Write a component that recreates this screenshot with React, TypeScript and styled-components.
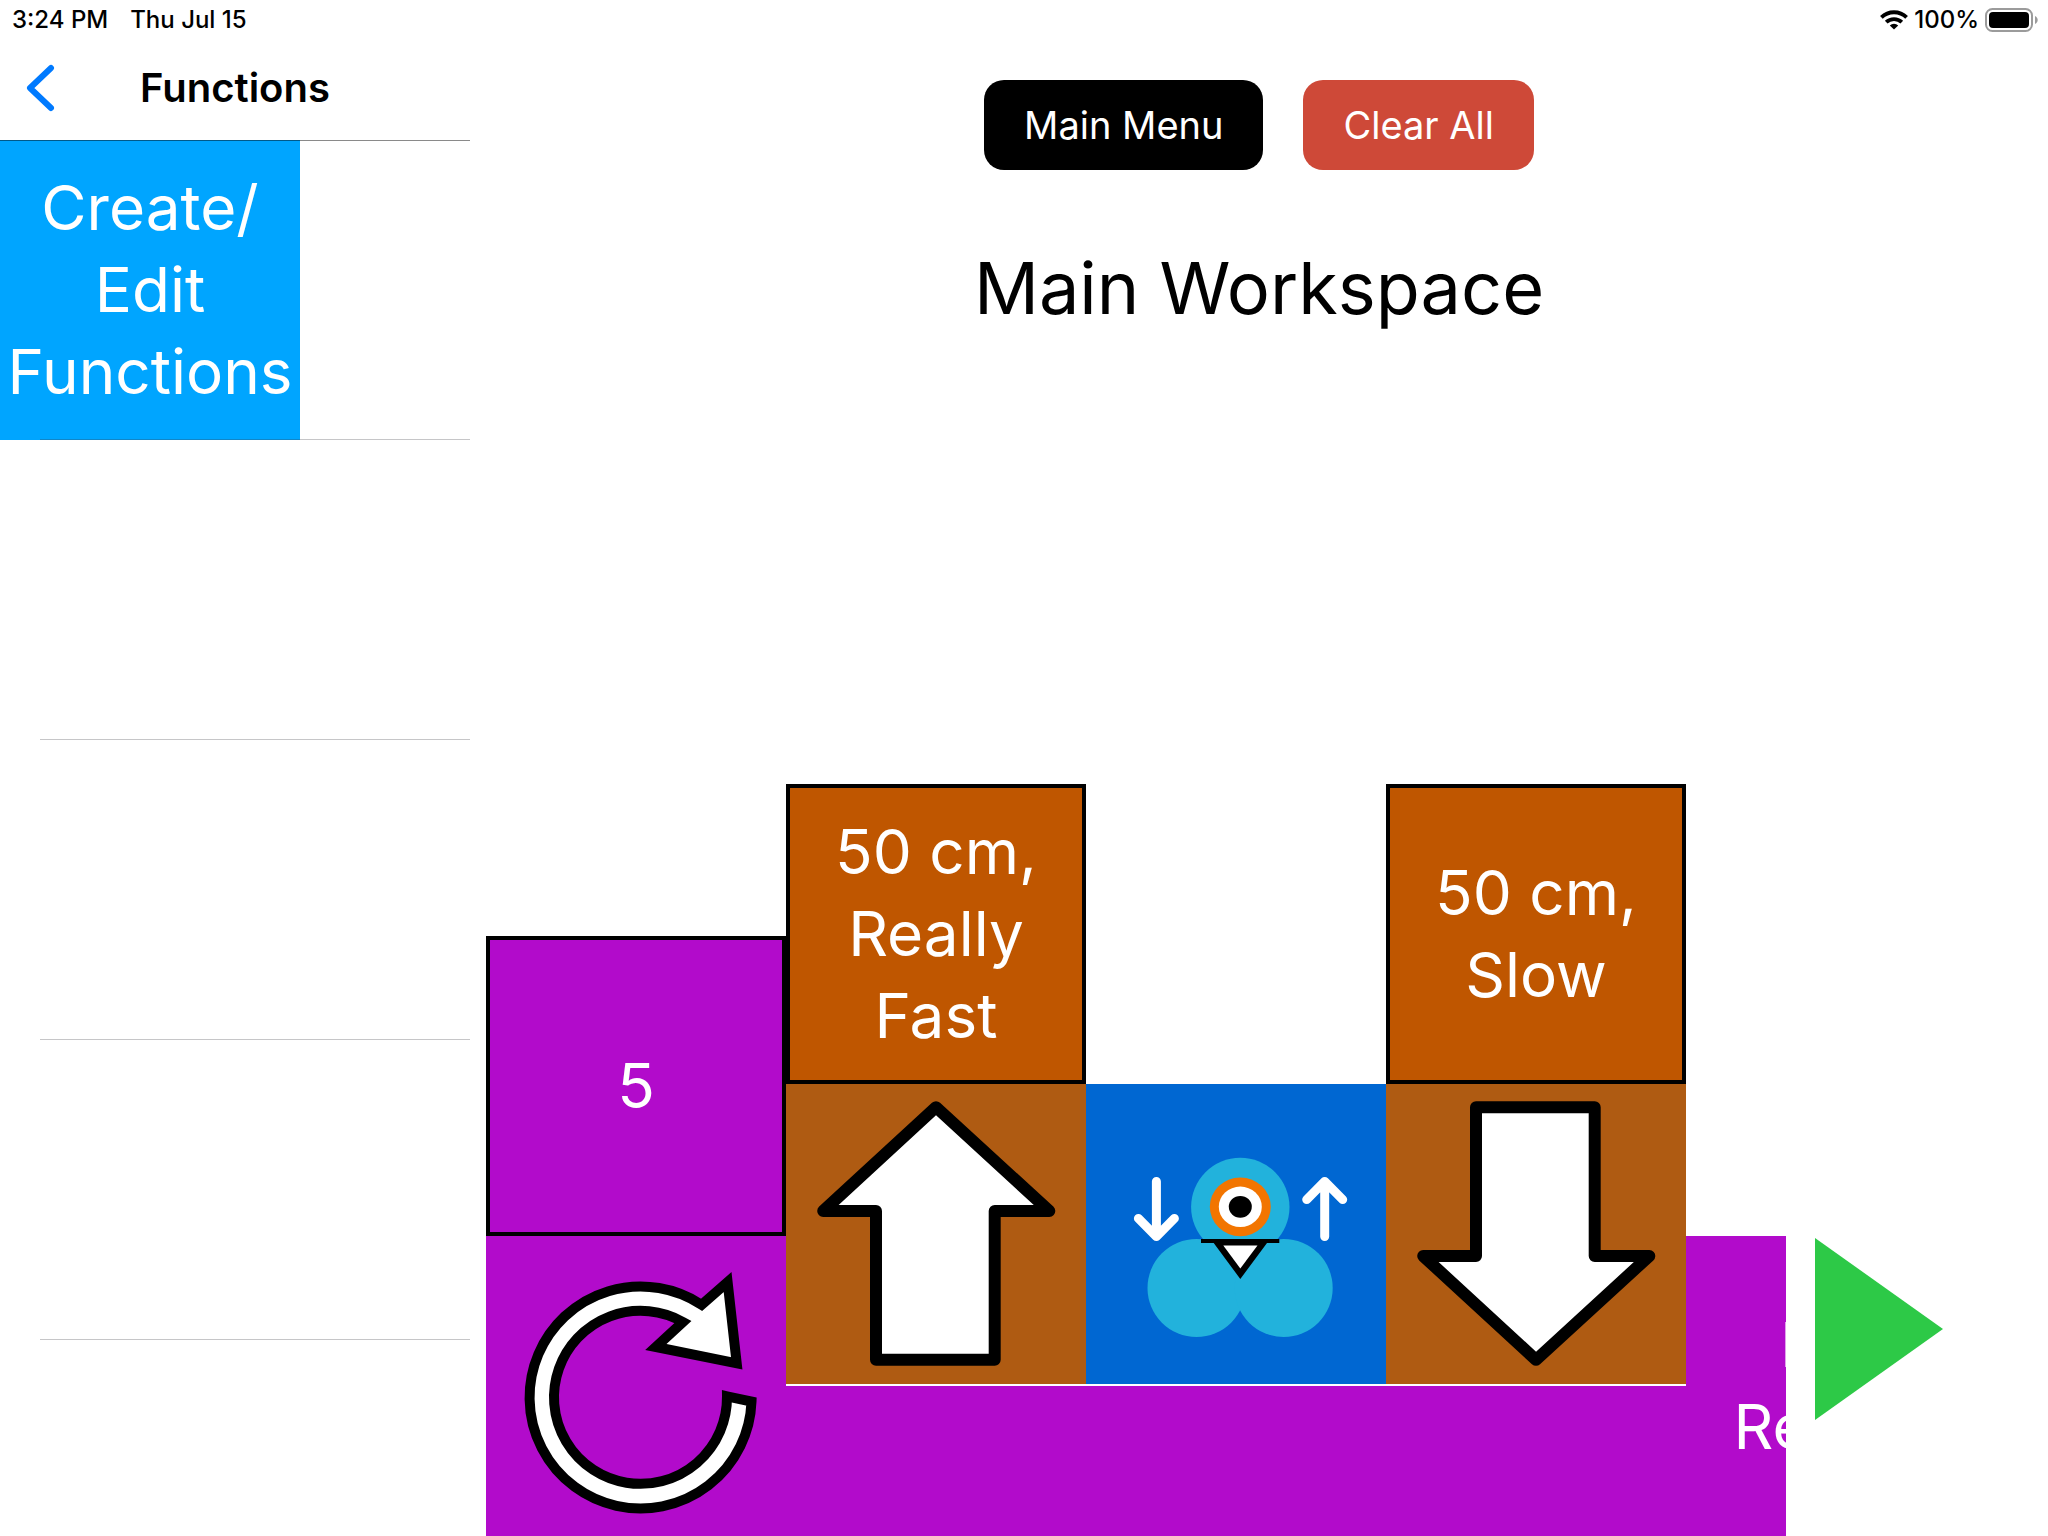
import React from "react";
import styled, { createGlobalStyle } from "styled-components";

const color = {
  link: "#007aff",
  sky: "#00a5ff",
  purple: "#b20bcb",
  brown: "#af5b12",
  rust: "#bf5600",
  blue: "#0067d2",
  teal: "#22b2dc",
  orange: "#f27500",
  red: "#ce4938",
  green: "#2dc947",
};

const GlobalStyle = createGlobalStyle`
  *, *::before, *::after { box-sizing: border-box; }
  html, body { margin: 0; padding: 0; background: #fff; }
  body {
    color: #000;
    font-family: Inter, "Liberation Sans", sans-serif;
    overflow: hidden;
  }
  h1, h2, ul { margin: 0; padding: 0; font-weight: 400; }
  button { border: 0; padding: 0; font: inherit; cursor: pointer; }
`;

const Screen = styled.div`
  display: flex;
  flex-direction: column;
  height: 100vh;
  overflow: hidden;
`;

const StatusBar = styled.header`
  display: flex;
  align-items: center;
  justify-content: space-between;
  flex: none;
  height: 40px;
  padding: 0 10px 0 12px;
  font-size: 24px;
  line-height: 32px;
  font-weight: 500;
`;

const StatusGroup = styled.div<{ $gap: number }>`
  display: flex;
  align-items: center;
  gap: ${(p) => p.$gap}px;
`;

const Body = styled.div`
  display: flex;
  flex: 1;
  min-height: 0;
`;

const Sidebar = styled.nav`
  flex: none;
  width: 470px;
  overflow: hidden;
`;

const NavHeader = styled.div`
  position: relative;
  display: grid;
  grid-template-columns: 80px 1fr 80px;
  align-items: center;
  height: 100px;
  padding-bottom: 4px;

  &::after {
    content: "";
    position: absolute;
    z-index: 1;
    top: 100%;
    left: 0;
    right: 0;
    height: 1px;
    background: rgba(0, 0, 0, 0.46);
  }
`;

const BackButton = styled.button`
  display: flex;
  align-items: center;
  justify-content: center;
  height: 80px;
  background: none;
  color: ${color.link};
`;

const NavTitle = styled.h2`
  font-size: 40px;
  line-height: 48px;
  font-weight: 600;
  text-align: center;
`;

const BlockList = styled.ul`
  list-style: none;
`;

const BlockRow = styled.li`
  position: relative;
  height: 300px;

  &::after {
    content: "";
    position: absolute;
    left: 40px;
    right: 0;
    bottom: 0;
    height: 1px;
    background: rgba(60, 60, 67, 0.29);
  }
`;

const Tile = styled.button<{ $fill: string; $outlined?: boolean }>`
  display: flex;
  align-items: center;
  justify-content: center;
  flex: none;
  width: 300px;
  height: 300px;
  border: ${(p) => (p.$outlined ? "4px solid #000" : "0")};
  background: ${(p) => p.$fill};
  color: #fff;
  font-size: 62px;
  line-height: 82px;
  text-align: center;
  white-space: pre-line;
`;

const Workspace = styled.main`
  display: flex;
  flex-direction: column;
  flex: 1;
  min-width: 0;
`;

const Actions = styled.div`
  display: flex;
  justify-content: center;
  gap: 40px;
  padding-top: 40px;
`;

const ActionButton = styled.button<{ $fill: string }>`
  height: 90px;
  padding: 0 40px;
  border-radius: 20px;
  background: ${(p) => p.$fill};
  color: #fff;
  font-size: 38px;
  line-height: 48px;
`;

const Title = styled.h1`
  margin-top: 70px;
  font-size: 72px;
  line-height: 96px;
  text-align: center;
`;

const ProgramArea = styled.div`
  display: flex;
  align-items: flex-end;
  margin-top: auto;
  padding-left: 16px;
`;

const Program = styled.section`
  display: flex;
  align-items: flex-end;
  flex: 1;
  min-width: 0;
  overflow: hidden;
`;

const Stack = styled.div`
  display: flex;
  flex-direction: column;
  flex: none;
`;

const LoopBody = styled.div`
  display: flex;
  flex-direction: column;
  flex: none;
  gap: 2px;
`;

const LoopSteps = styled.div`
  display: flex;
  align-items: flex-end;
`;

const LoopBar = styled.div`
  height: 150px;
  background: ${color.purple};
`;

const RunPanel = styled.aside`
  flex: none;
  width: 262px;
  padding: 0 0 116px 29px;
`;

const RunButton = styled.button`
  display: block;
  background: none;
`;

const WifiIcon = () => (
  <svg width="28" height="20" viewBox="0 0 28 20" aria-hidden="true">
    <g fill="none" stroke="#000" strokeWidth="3.8">
      <path d="M1.4 7.4A18 18 0 0 1 26.6 7.4" />
      <path d="M6.2 12.2A11.2 11.2 0 0 1 21.8 12.2" />
    </g>
    <path d="M14 19.6L9.8 15.4A6 6 0 0 1 18.2 15.4Z" fill="#000" />
  </svg>
);

const BatteryIcon = () => (
  <svg width="53" height="24" viewBox="0 0 53 24" aria-hidden="true">
    <rect x="1" y="1" width="46" height="22" rx="6.5" fill="none" stroke="#9b9b9b" strokeWidth="2" />
    <rect x="4" y="4" width="40" height="16" rx="4" fill="#000" />
    <path d="M50 8C53.6 9.4 53.6 14.6 50 16Z" fill="#9b9b9b" />
  </svg>
);

const BackIcon = () => (
  <svg width="30" height="48" viewBox="0 0 30 48" aria-hidden="true">
    <path
      d="M26 4L5 24L26 44"
      fill="none"
      stroke="currentColor"
      strokeWidth="6"
      strokeLinecap="round"
      strokeLinejoin="round"
    />
  </svg>
);

const TileArt = ({ children }: { children: React.ReactNode }) => (
  <svg width="300" height="300" viewBox="0 0 300 300" aria-hidden="true">
    {children}
  </svg>
);

const RepeatArt = () => (
  <TileArt>
    <path
      d="M241 160.3L265.5 165.6A111 111 0 1 1 215.7 68.8L241.6 46L250.7 127.3L169.8 111L197 86A86.5 86.5 0 1 0 241 160.3Z"
      fill="#fff"
      stroke="#000"
      strokeWidth="10"
      strokeMiterlimit="8"
    />
  </TileArt>
);

const ForwardArt = () => (
  <TileArt>
    <path
      d="M150 23.2L263.3 127H208.7V275.7H90V127H37.2Z"
      fill="#fff"
      stroke="#000"
      strokeWidth="12"
      strokeLinejoin="round"
    />
  </TileArt>
);

const BackwardArt = () => (
  <TileArt>
    <path
      d="M150 275.8L263.3 172H208.7V23.2H90V172H37.2Z"
      fill="#fff"
      stroke="#000"
      strokeWidth="12"
      strokeLinejoin="round"
    />
  </TileArt>
);

const RobotArt = () => (
  <TileArt>
    <g fill={color.teal}>
      <circle cx="154.3" cy="123" r="49.2" />
      <circle cx="110.5" cy="204" r="49" />
      <circle cx="197.7" cy="204" r="49" />
    </g>
    <ellipse cx="154.3" cy="122.8" rx="30.5" ry="29.4" fill={color.orange} />
    <ellipse cx="154.3" cy="122.8" rx="21.5" ry="20.2" fill="#fff" />
    <ellipse cx="154.3" cy="122.8" rx="11.5" ry="10.9" fill="#000" />
    <path d="M115 155H193.3V159H181L154.3 195L127.7 159H115Z" fill="#000" />
    <path d="M137.3 161.5H171.5L154.3 184.4Z" fill="#fff" />
    <g fill="none" stroke="#fff" strokeWidth="9" strokeLinecap="round" strokeLinejoin="round">
      <path d="M70.4 97.4V152.6M52.4 134.4L70.4 152.6L88.4 134.4" />
      <path d="M238.7 152.6V97.4M220.7 115.6L238.7 97.4L256.7 115.6" />
    </g>
  </TileArt>
);

export default function App() {
  return (
    <>
      <GlobalStyle />
      <Screen>
        <StatusBar>
          <StatusGroup $gap={22}>
            <span>3:24 PM</span>
            <span>Thu Jul 15</span>
          </StatusGroup>
          <StatusGroup $gap={6}>
            <WifiIcon />
            <span>100%</span>
            <BatteryIcon />
          </StatusGroup>
        </StatusBar>

        <Body>
          <Sidebar aria-label="Functions">
            <NavHeader>
              <BackButton type="button" aria-label="Back">
                <BackIcon />
              </BackButton>
              <NavTitle>Functions</NavTitle>
            </NavHeader>
            <BlockList>
              <BlockRow>
                <Tile type="button" $fill={color.sky}>
                  {"Create/\nEdit\nFunctions"}
                </Tile>
              </BlockRow>
              <BlockRow />
              <BlockRow />
              <BlockRow />
              <BlockRow />
            </BlockList>
          </Sidebar>

          <Workspace>
            <Actions>
              <ActionButton type="button" $fill="#000">
                Main Menu
              </ActionButton>
              <ActionButton type="button" $fill={color.red}>
                Clear All
              </ActionButton>
            </Actions>
            <Title>Main Workspace</Title>

            <ProgramArea>
              <Program aria-label="Program">
                <Stack>
                  <Tile type="button" $fill={color.purple} $outlined>
                    5
                  </Tile>
                  <Tile type="button" $fill={color.purple} aria-label="Repeat">
                    <RepeatArt />
                  </Tile>
                </Stack>
                <LoopBody>
                  <LoopSteps>
                    <Stack>
                      <Tile type="button" $fill={color.rust} $outlined>
                        {"50 cm,\nReally\nFast"}
                      </Tile>
                      <Tile type="button" $fill={color.brown} aria-label="Drive forward">
                        <ForwardArt />
                      </Tile>
                    </Stack>
                    <Tile type="button" $fill={color.blue} aria-label="Look up and down">
                      <RobotArt />
                    </Tile>
                    <Stack>
                      <Tile type="button" $fill={color.rust} $outlined>
                        {"50 cm,\nSlow"}
                      </Tile>
                      <Tile type="button" $fill={color.brown} aria-label="Drive backward">
                        <BackwardArt />
                      </Tile>
                    </Stack>
                  </LoopSteps>
                  <LoopBar />
                </LoopBody>
                <Tile type="button" $fill={color.purple}>
                  {"End\nRepeat"}
                </Tile>
              </Program>
              <RunPanel>
                <RunButton type="button" aria-label="Run program">
                  <svg width="128" height="182" viewBox="0 0 128 182" display="block" aria-hidden="true">
                    <path d="M0 0L128 91L0 182Z" fill={color.green} />
                  </svg>
                </RunButton>
              </RunPanel>
            </ProgramArea>
          </Workspace>
        </Body>
      </Screen>
    </>
  );
}
